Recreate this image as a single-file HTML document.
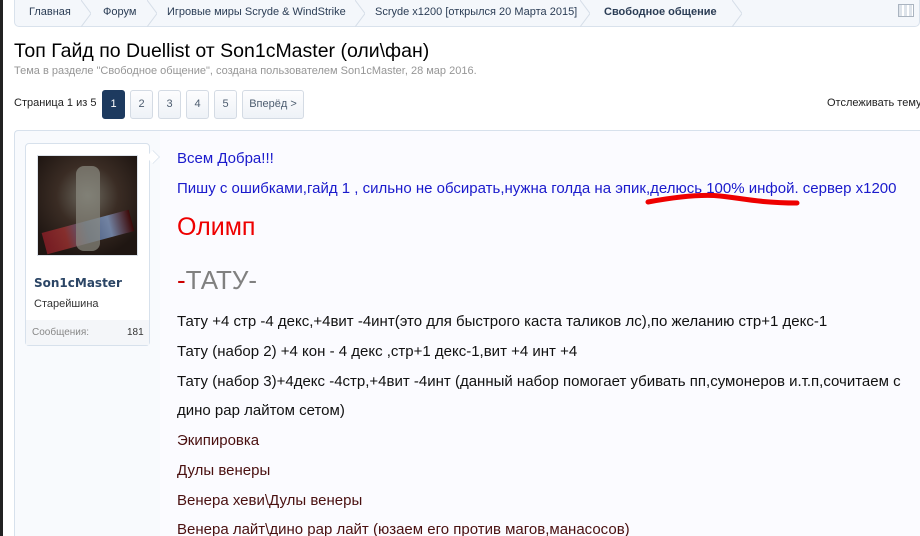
<!DOCTYPE html>
<html style="width:920px;height:536px;overflow:hidden"><head><meta charset="utf-8"><style>
*{margin:0;padding:0;box-sizing:border-box}
body{width:920px;height:536px;overflow:hidden;background:#fff;font-family:"Liberation Sans",sans-serif;position:relative}
.strip{position:absolute;left:0;top:0;width:3px;height:536px;background:#222}
.crumbs{position:absolute;left:14px;top:0;width:906px;height:27px;background:#f4f7fb;border:1px solid #d9e2ec;border-top:none;border-radius:0 0 5px 5px;font-size:11px;color:#2b3d55}
.crumbs span{position:absolute;top:6px;white-space:nowrap}
.chev{position:absolute;top:0;width:10px;height:27px}
h1{position:absolute;left:14px;top:40px;font:19.5px "Liberation Sans",sans-serif;color:#000}
.sub{position:absolute;left:14px;top:65px;font-size:11px;color:#969696}
.pg{position:absolute;top:90px;height:29px;border:1px solid #d4dbe4;border-radius:3px;background:linear-gradient(#fdfdfe,#eef2f7);font-size:11px;color:#4d5d70;text-align:center;line-height:27px}
.post{position:absolute;left:14px;top:130px;width:906px;height:406px;border:1px solid #d7e1ec;border-bottom:none;border-right:none;background:#f8fafd;border-radius:4px 0 0 0;overflow:hidden}
.user{position:absolute;left:25px;top:143px;width:125px;height:203px;border:1px solid #d7e1ec;background:#fff;border-radius:4px}
.av{position:absolute;left:37px;top:155px;width:101px;height:101px;border:1px solid #dde3ea;background:radial-gradient(circle at 50% 40%,#6c6a60 0,#3a2c24 40%,#1f1612 80%);overflow:hidden}
.msg{position:absolute;left:177px;font-family:"Liberation Sans",sans-serif;font-size:15px;white-space:nowrap}
</style></head><body>
<div class="strip"></div>
<div class="crumbs">
<span style="left:14px">Главная</span>
<svg class="chev" style="left:66px" viewBox="0 0 10 27"><path d="M0 0 L10 13.5 L0 27" stroke="#d6dee8" fill="none"/></svg>
<span style="left:88px">Форум</span>
<svg class="chev" style="left:132px" viewBox="0 0 10 27"><path d="M0 0 L10 13.5 L0 27" stroke="#d6dee8" fill="none"/></svg>
<span style="left:152px">Игровые миры Scryde &amp; WindStrike</span>
<svg class="chev" style="left:340px" viewBox="0 0 10 27"><path d="M0 0 L10 13.5 L0 27" stroke="#d6dee8" fill="none"/></svg>
<span style="left:360px">Scryde x1200 [открылся 20 Марта 2015]</span>
<svg class="chev" style="left:565px" viewBox="0 0 10 27"><path d="M0 0 L10 13.5 L0 27" stroke="#d6dee8" fill="none"/></svg>
<span style="left:589px;font-weight:bold">Свободное общение</span>
<svg class="chev" style="left:717px" viewBox="0 0 10 27"><path d="M0 0 L10 13.5 L0 27" stroke="#d6dee8" fill="none"/></svg>
<span style="left:883px;top:4px;width:16px;height:13px;border:1px solid #aab4c0;background:repeating-linear-gradient(90deg,#dde3ea 0 3px,#fff 3px 5px)"></span>
</div>
<h1>Топ Гайд по Duellist от Son1cMaster (оли\фан)</h1>
<div class="sub">Тема в разделе "Свободное общение", создана пользователем Son1cMaster, 28 мар 2016.</div>
<div style="position:absolute;left:14px;top:97px;font-size:11px;color:#222">Страница 1 из 5</div>
<div class="pg" style="left:102px;width:23px;background:#1d3a5f;color:#fff;border-color:#1d3a5f">1</div>
<div class="pg" style="left:130px;width:23px">2</div>
<div class="pg" style="left:158px;width:23px">3</div>
<div class="pg" style="left:186px;width:23px">4</div>
<div class="pg" style="left:214px;width:23px">5</div>
<div class="pg" style="left:242px;width:62px">Вперёд &gt;</div>
<div style="position:absolute;left:827px;top:97px;font-size:11px;color:#222;white-space:nowrap">Отслеживать тему</div>
<div class="post">
<div style="position:absolute;left:145px;top:0;width:761px;height:406px;background:#fbfbff"></div>
<div class="msg" style="left:162px;top:390px;color:#4a1010">Венера лайт\дино рар лайт (юзаем его против магов,манасосов)</div>
</div>
<div class="user"></div>
<div style="position:absolute;left:146px;top:150px;width:14px;height:14px;background:#fff;border-top:1px solid #d7e1ec;border-right:1px solid #d7e1ec;transform:rotate(45deg) scale(.7)"></div>
<div class="av"><div style="position:absolute;left:5px;top:65px;width:90px;height:22px;background:linear-gradient(90deg,#9b1f2a,#a33,#5a7ab0,#8aa8d8,#400);opacity:.7;transform:rotate(-15deg)"></div><div style="position:absolute;left:38px;top:10px;width:24px;height:85px;background:#8a8a80;border-radius:8px;opacity:.7"></div></div>
<div style="position:absolute;left:34px;top:276px;font:bold 12px 'DejaVu Sans',sans-serif;color:#2b4565">Son1cMaster</div>
<div style="position:absolute;left:34px;top:298px;font-size:11px;color:#333">Старейшина</div>
<div style="position:absolute;left:26px;top:320px;width:123px;height:25px;background:#f4f6f9"></div>
<div style="position:absolute;left:32px;top:327px;font-size:10px;color:#888">Сообщения:</div>
<div style="position:absolute;left:127px;top:327px;font-size:10px;color:#333">181</div>
<div class="msg" style="top:150px;color:#1a1acc">Всем Добра!!!</div>
<div class="msg" style="top:180px;color:#1a1acc">Пишу с ошибками,гайд 1 , сильно не обсирать,нужна голда на эпик,делюсь 100% инфой. сервер х1200</div>
<svg style="position:absolute;left:640px;top:190px" width="170" height="25"><path d="M8 12 C30 8,60 4,80 6 C100 8,120 13,157 13" stroke="#e00" stroke-width="5" fill="none" stroke-linecap="round"/></svg>
<div class="msg" style="top:213px;color:#e00;font-size:25px">Олимп</div>
<div class="msg" style="top:265px;color:#808080;font-size:26px"><span style="color:#c00">-</span>ТАТУ-</div>
<div class="msg" style="top:313px;color:#111">Тату +4 стр -4 декс,+4вит -4инт(это для быстрого каста таликов лс),по желанию стр+1 декс-1</div>
<div class="msg" style="top:343px;color:#111">Тату (набор 2) +4 кон - 4 декс ,стр+1 декс-1,вит +4 инт +4</div>
<div class="msg" style="top:373px;color:#111">Тату (набор 3)+4декс -4стр,+4вит -4инт (данный набор помогает убивать пп,сумонеров и.т.п,сочитаем с</div>
<div class="msg" style="top:402px;color:#111">дино рар лайтом сетом)</div>
<div class="msg" style="top:432px;color:#4a1010">Экипировка</div>
<div class="msg" style="top:462px;color:#4a1010">Дулы венеры</div>
<div class="msg" style="top:492px;color:#4a1010">Венера хеви\Дулы венеры</div>
</body></html>
